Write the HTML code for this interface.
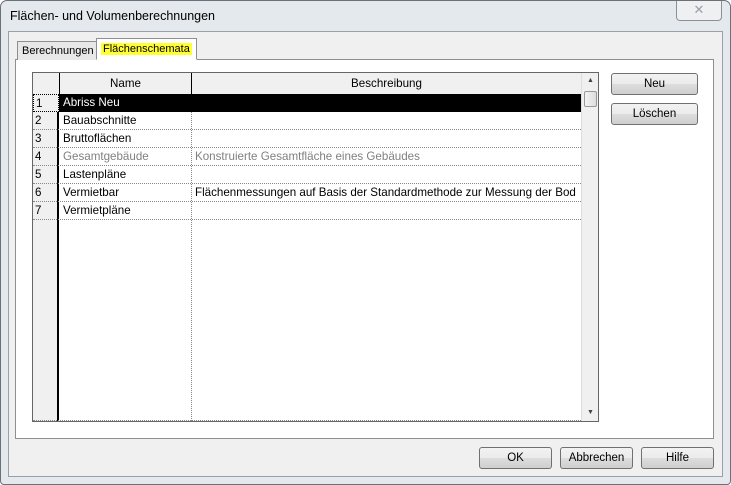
<!DOCTYPE html>
<html><head><meta charset="utf-8"><style>
*{margin:0;padding:0;box-sizing:border-box}
body{width:731px;height:485px;overflow:hidden;background:#fff;font-family:"Liberation Sans",sans-serif;font-size:12px;color:#000;position:relative}
.abs{position:absolute}
.frame{left:0;top:0;width:731px;height:485px;background:#e4e9ee;border:1px solid #6b7177;border-radius:7px 7px 4px 4px}
.title{left:10px;top:9px;font-size:12.5px;color:#000}
.close{left:676px;top:1px;width:46px;height:20px;border:1px solid #8a9096;border-top:none;border-radius:0 0 4px 4px;background:#eef0f2;text-align:center;color:#9aa0a8;font-size:13px;line-height:18px}
.client{left:8px;top:31px;width:715px;height:446px;background:#f0f0f0;border:1px solid #9aa0a6}
.panel{left:15px;top:59px;width:699px;height:380px;background:#fff;border:1px solid #8e8f8f}
.tab{height:20px;border:1px solid #8e8f8f;border-bottom:none;background:#e8e8e8;font-size:11px;line-height:18px;padding:0 4px}
.btn{height:22px;border:1px solid #707070;border-radius:3px;background:linear-gradient(#f2f2f2 0,#ebebeb 50%,#dddddd 51%,#cfcfcf 100%);text-align:center;font-size:11.5px;line-height:20px}
.grid{left:32px;top:72px;width:567px;height:350px;border:1px solid #666;background:#fff;font-size:11.6px}
.rh{left:0;top:0;width:26px;height:348px;background:#f0f0f0;border-right:2px solid #000}
.row{left:0;width:548px;height:18px;border-bottom:1px dotted #888}
.c{position:absolute;top:0;height:18px;line-height:17px;white-space:nowrap;overflow:hidden}
.sb{left:548px;top:0;width:17px;height:348px;background:#f0f0f0;border-left:1px solid #ddd}
</style></head><body>
<div class="abs frame"></div>
<div class="abs title">Flächen- und Volumenberechnungen</div>
<div class="abs close">&#x2715;</div>
<div class="abs client"></div>
<div class="abs panel"></div>
<div class="abs tab" style="left:17px;top:41px;height:19px;width:80px">Berechnungen</div>
<div class="abs tab" style="left:96px;top:38px;height:22px;background:#fff;border-bottom:1px solid #fff;line-height:20px"><span style="background:#ffff33;padding:0 2px">Flächenschemata</span></div>
<div class="abs grid">
 <div class="abs rh"></div>
 <div class="abs" style="left:0;top:0;width:548px;height:22px;background:#f0f0f0;border-bottom:1px solid #888">
  <div class="c" style="left:26px;width:133px;height:22px;line-height:22px;text-align:center;border-left:1px solid #000;border-right:1px solid #000">Name</div>
  <div class="c" style="left:159px;width:389px;height:22px;line-height:22px;text-align:center">Beschreibung</div>
 </div>
 <div class="abs" style="left:158px;top:22px;width:1px;height:326px;border-left:1px dotted #888"></div>
 <div class="abs row" style="top:21px;background:#000;color:#fff;border-bottom:1px solid #000"><div class="c" style="left:0;width:26px;background:#f0f0f0;color:#000;padding-left:2px;border:1px dotted #000">1</div><div class="c" style="left:30px">Abriss Neu</div></div>
 <div class="abs row" style="top:39px"><div class="c" style="left:2px">2</div><div class="c" style="left:30px">Bauabschnitte</div></div>
 <div class="abs row" style="top:57px"><div class="c" style="left:2px">3</div><div class="c" style="left:30px">Bruttoflächen</div></div>
 <div class="abs row" style="top:75px;color:#808080"><div class="c" style="left:2px;color:#000">4</div><div class="c" style="left:30px">Gesamtgebäude</div><div class="c" style="left:162px">Konstruierte Gesamtfläche eines Gebäudes</div></div>
 <div class="abs row" style="top:93px"><div class="c" style="left:2px">5</div><div class="c" style="left:30px">Lastenpläne</div></div>
 <div class="abs row" style="top:111px"><div class="c" style="left:2px">6</div><div class="c" style="left:30px">Vermietbar</div><div class="c" style="left:162px;width:385px">Flächenmessungen auf Basis der Standardmethode zur Messung der Bod</div></div>
 <div class="abs row" style="top:129px"><div class="c" style="left:2px">7</div><div class="c" style="left:30px">Vermietpläne</div></div>
 <div class="abs" style="left:0;top:347px;width:548px;border-bottom:1px dotted #888"></div>
 <div class="abs sb"><div class="abs" style="left:5px;top:4px;font-size:7px;color:#444">▲</div><div class="abs" style="left:2px;top:18px;width:13px;height:16px;border:1px solid #999;border-radius:2px;background:linear-gradient(90deg,#f4f4f4,#dcdcdc)"></div><div class="abs" style="left:5px;top:336px;font-size:7px;color:#444">▼</div></div>
</div>
<div class="abs btn" style="left:611px;top:73px;width:87px">Neu</div>
<div class="abs btn" style="left:611px;top:103px;width:87px">Löschen</div>
<div class="abs btn" style="left:479px;top:447px;width:73px">OK</div>
<div class="abs btn" style="left:560px;top:447px;width:73px">Abbrechen</div>
<div class="abs btn" style="left:641px;top:447px;width:73px">Hilfe</div>
</body></html>
